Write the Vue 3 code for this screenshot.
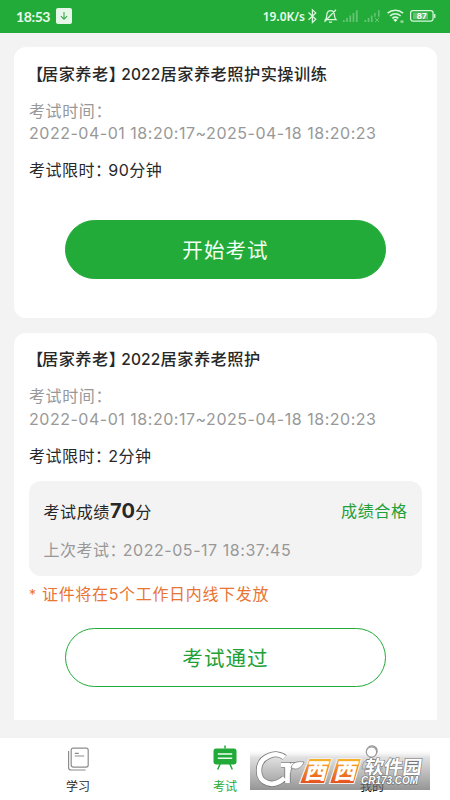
<script setup>
const exams = [
  { year: '2022', name: '居家养老照护实操训练', limit: '90分钟' },
  { year: '2022', name: '居家养老照护', limit: '2分钟', score: '70', last: '2022-05-17 18:37:45' },
]
const period = '2022-04-01 18:20:17~2025-04-18 18:20:23'
</script>

<template>
  <div class="page">
    <header class="status">
      <span class="clock">18:53</span>
      <svg class="download" viewBox="0 0 16 16" width="16" height="16">
        <rect width="16" height="16" rx="2" fill="#e6f7e8" />
        <path d="M8 4v7M4.9 8.2 8 11.2l3.1-3" fill="none" stroke="#3da750" stroke-width="1.1" />
      </svg>
      <span class="speed">19.0K/s</span>
      <svg class="signals" viewBox="308 6 130 20" width="130" height="20">
        <g fill="none" stroke="#d8f7dc" stroke-width="1.25">
          <path d="m308.5 12.5 7.3 6.8-3.4 3.2V9.8l3.4 3.1-7.3 6.8" />
          <path d="M325.5 19.5c1.6-1.5 1-4.3 1.6-6.2.6-1.7 1.8-2.6 3.5-2.6s3 1 3.5 2.7c.6 2 .2 4.8 1.8 6.1zM324.5 21.8l11.5-12M329 22h3" />
          <path d="M387.6 13.2c4.5-4 11-4 15.5 0M390 16c3.2-2.8 7.5-2.8 10.7 0M392.3 18.4c1.9-1.5 4.2-1.5 6.1 0" stroke-width="1.6" />
          <rect x="410.6" y="10.6" width="22.5" height="10.5" rx="2.5" />
        </g>
        <path d="m395.4 22-2.2-2.2q2.2-1.7 4.4 0z" fill="#e6fae7" />
        <circle cx="402" cy="21.6" r="1.7" fill="#89d592" />
        <path d="M434 14h1.5v4H434z" fill="#c7efcc" />
        <rect x="413" y="12.6" width="15" height="6.6" fill="#65c174" />
        <g fill="#65c574">
          <path d="M343 20h1.7v2H343zM346.2 18h1.7v4h-1.7zM349.4 15.5h1.7V22h-1.7zM352.6 13h1.7v9h-1.7zM355.9 10.2h1.8V22h-1.8z" />
          <path d="M364.5 20h1.7v2h-1.7zM367.7 18h1.7v4h-1.7zM370.9 15.5h1.7V22h-1.7zM374.2 13h1.5v3.8h-1.5zM378 10.2h1.6v6.6H378z" />
        </g>
        <path d="m375 18 4 4m0-4-4 4" stroke="#65c574" />
        <text x="421.8" y="19.1" text-anchor="middle" class="battery">87</text>
      </svg>
    </header>

    <main class="list">
      <section v-for="exam in exams" :key="exam.name" class="card" :class="{ done: exam.score }">
        <h2 class="title"><span class="open">【</span>居家养老<span class="close">】</span><span class="year">{{ exam.year }}</span>{{ exam.name }}</h2>
        <p class="muted">考试时间：</p>
        <p class="muted date">{{ period }}</p>
        <p class="limit">考试限时<span class="colon">：</span>{{ exam.limit }}</p>
        <template v-if="exam.score">
          <div class="result">
            <div class="row">
              <span>考试成绩<b>{{ exam.score }}</b>分</span>
              <span class="pass">成绩合格</span>
            </div>
            <p class="last">上次考试<span class="colon">：</span><span class="stamp">{{ exam.last }}</span></p>
          </div>
          <p class="notice"><span class="star">*</span>证件将在5个工作日内线下发放</p>
        </template>
        <button class="action">{{ exam.score ? '考试通过' : '开始考试' }}</button>
      </section>
    </main>

    <nav class="tabs">
      <div class="tab">
        <svg viewBox="0 0 24 26" width="24" height="26" fill="none" stroke="#8c8c8c" stroke-width="1.2">
          <rect x="5.2" y="3.1" width="17" height="19" rx="2" />
          <path d="M2.6 6v16.8Q2.6 25 5.1 25H19.6" />
          <path d="M8.8 8.3h4M8.8 11h9.4" />
        </svg>
        <span>学习</span>
      </div>
      <div class="tab active">
        <svg viewBox="0 0 24 26" width="24" height="26">
          <rect x="0.5" y="3.4" width="23" height="16" rx="2.5" fill="#22aa38" />
          <path d="M12 .5v3M7.3 18.5l-2.6 6M16.7 18.5l2.6 6" stroke="#22aa38" stroke-width="1.5" />
          <path d="M4.8 9.1h14.4M4.8 13.3h14.4" stroke="#effff0" stroke-width="1.5" />
        </svg>
        <span>考试</span>
      </div>
      <div class="tab mine">
        <svg viewBox="0 0 24 26" width="24" height="26" fill="none" stroke="#8c8c8c" stroke-width="1.2">
          <circle cx="12" cy="6" r="5.2" />
          <path d="M2 24q0-10 10-10t10 10z" />
        </svg>
        <span>我的</span>
      </div>
      <svg class="mark" viewBox="250 745 180 45" width="180" height="45">
        <defs>
          <linearGradient id="shade" x1="0" y1="0" x2="0" y2="1">
            <stop offset="0" stop-color="#fff" stop-opacity="0" />
            <stop offset=".2" stop-color="#d4d4d4" stop-opacity=".7" />
            <stop offset="1" stop-color="#686868" stop-opacity=".7" />
          </linearGradient>
          <linearGradient id="fire" x1="0" y1="0" x2="0" y2="1">
            <stop offset="0" stop-color="#f9b52c" />
            <stop offset="1" stop-color="#e6501f" />
          </linearGradient>
        </defs>
        <rect x="250" y="749" width="180" height="41" fill="url(#shade)" />
        <circle cx="371.5" cy="752" r="5.2" fill="#fff" stroke="#999" stroke-width="1.2" />
        <g fill="none">
          <path d="M284.5 757.5C277 750.5 259 756 259 770.5c0 13 14 18 25.5 7.5M281 765h6.5v18M288 773c0-7 3.5-9 8-7.5" stroke="#777" stroke-width="6.2" />
          <path d="M284.5 757.5C277 750.5 259 756 259 770.5c0 13 14 18 25.5 7.5M281 765h6.5v18M288 773c0-7 3.5-9 8-7.5" stroke="#fff" stroke-width="4.7" />
        </g>
        <path d="M291 768c1-6 7-7 13-6-2 5-7 9-12 6z" fill="#fff" stroke="#777" stroke-width=".7" />
        <path d="M309 758.5h23l-7.5 25h-25zM337.5 758.5h24l-7.5 25h-24.5z" fill="url(#fire)" stroke="#eee" stroke-width="1.2" />
        <g transform="translate(304 778.5) skewX(-14)"><text class="west">西</text><text x="29.5" class="west">西</text></g>
        <g transform="translate(364 773.5) skewX(-8)"><text class="soft" textLength="57">软件园</text></g>
        <text x="361" y="783.5" class="site" textLength="57" lengthAdjust="spacingAndGlyphs">CR173.COM</text>
      </svg>
    </nav>
  </div>
</template>

<style>
body { margin: 0; background: #f3f3f3; }
</style>

<style scoped>
.page {
  width: 450px;
  height: 800px;
  display: flex;
  flex-direction: column;
  overflow: hidden;
  background: #f3f3f3;
  color: #282828;
  font-family: Inter, "Noto Sans CJK SC", sans-serif;
}
h2, p { margin: 0; white-space: nowrap; }
.status {
  box-sizing: border-box;
  flex: 0 0 32.5px;
  display: flex;
  align-items: center;
  padding: 0 12px 0 16px;
  background: #22ab38;
  color: #e8fbea;
  font-family: Lato, sans-serif;
}
.clock { width: 40px; font-size: 14px; font-weight: 700; letter-spacing: -.4px; }
.speed { margin-left: auto; font-family: "Noto Sans", sans-serif; font-size: 12px; font-weight: 600; margin-right: 3px; }
.battery { font: 700 8px Inter, sans-serif; fill: #fff; }
.list {
  height: 687.5px;
  flex: none;
  box-sizing: border-box;
  padding: 14.5px 13.5px 0 14px;
  display: flex;
  flex-direction: column;
  gap: 15px;
  overflow: hidden;
}
.card {
  flex: none;
  box-sizing: border-box;
  height: 270.5px;
  padding: 15.5px 14.5px 0 15px;
  background: #fff;
  border-radius: 12px;
  font-size: 16px;
}
.done { height: 400px; }
.title { height: 22px; line-height: 22px; font-size: 16.2px; font-weight: 500; letter-spacing: .5px; margin-bottom: 15px; }
.open { margin-left: -2px; margin-right: -1.7px; }
.close { margin-right: -4.2px; }
.year { font-size: 15.5px; letter-spacing: .15px; }
.muted { color: #989898; height: 22.5px; line-height: 22.5px; letter-spacing: .6px; }
.date { letter-spacing: .52px; }
.limit { height: 22px; line-height: 22px; margin-top: 14.5px; letter-spacing: .5px; }
.colon { margin-right: -3.3px; }
.action {
  display: block;
  box-sizing: border-box;
  width: 321px;
  height: 59px;
  margin: 39px auto 0;
  border: 1.5px solid #22ab38;
  border-radius: 30px;
  background: #22ab38;
  color: #f2fff3;
  font: 20.5px/57px "Noto Sans CJK SC", sans-serif;
  letter-spacing: 1.1px;
  padding: 0;
}
.done .action { background: #fff; color: #22a038; margin-top: 23.3px; }
.result {
  box-sizing: border-box;
  height: 95px;
  margin-top: 14.3px;
  padding: 18px 14.5px 0 14.5px;
  border-radius: 12px;
  background: #f3f3f3;
}
.row { display: flex; justify-content: space-between; height: 25px; line-height: 25px; letter-spacing: .6px; }
.row b { font-size: 20px; font-weight: 700; letter-spacing: .3px; }
.pass { color: #22a038; }
.last { margin-top: 15px; height: 22px; line-height: 22px; color: #989898; letter-spacing: .5px; }
.stamp { letter-spacing: .55px; }
.notice { height: 22px; line-height: 22px; margin-top: 7px; color: #e87534; letter-spacing: .67px; }
.star { display: inline-block; width: 13px; font-size: 14px; }
.tabs {
  position: relative;
  margin-top: 18px;
  flex: 1;
  display: flex;
  align-items: flex-start;
  justify-content: space-between;
  padding: 7px 66px 0;
  background: #fff;
}
.tab { width: 24px; display: flex; flex-direction: column; align-items: center; font: 12px/16px "Noto Sans CJK SC", sans-serif; white-space: nowrap; }
.tab svg { display: block; margin-bottom: 6.5px; }
.active { color: #22aa38; }
.mine { color: #000; }
.mark { position: absolute; left: 250px; top: 7px; }
.west { font: 900 22px "Noto Sans CJK SC", sans-serif; fill: #fff; }
.soft { font: 700 19px "Noto Sans CJK SC", sans-serif; fill: #fff; stroke: #777; stroke-width: 1.2px; paint-order: stroke; }
.site { font: italic 700 11.5px "Liberation Sans", sans-serif; fill: #fff; stroke: #666; stroke-width: 1.2px; paint-order: stroke; }
</style>
